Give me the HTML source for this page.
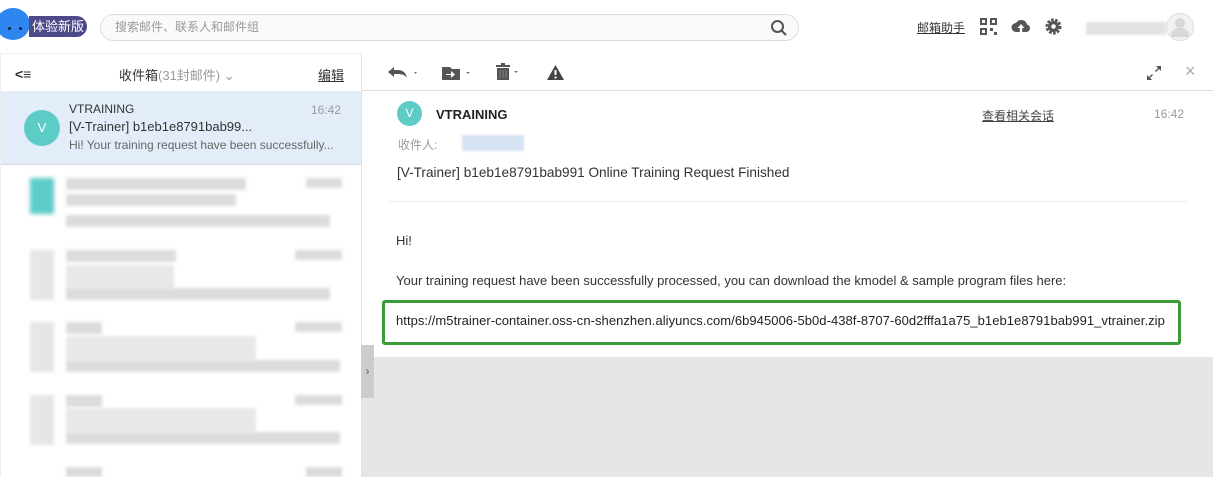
<!DOCTYPE html>
<html><head><meta charset="utf-8"><style>
*{margin:0;padding:0;box-sizing:border-box}
body{width:1213px;height:477px;overflow:hidden;background:#fff;font-family:"Liberation Sans","Noto Sans CJK SC",sans-serif;position:relative;color:#333}
.a{position:absolute}
.b{position:absolute;background:#dcdcdc;filter:blur(1.5px)}
</style></head><body>
<!-- top bar -->
<div class="a" style="left:-4px;top:8px;width:34px;height:32px;border-radius:50%;background:#2e86f0"></div>
<div class="a" style="left:8px;top:27px;width:3px;height:3px;background:#123;border-radius:50%"></div>
<div class="a" style="left:19px;top:27px;width:3px;height:3px;background:#123;border-radius:50%"></div>
<div class="a" style="left:29px;top:16px;width:58px;height:21px;border-radius:0 11px 11px 0;background:#4d4a8a;color:#fff;font-size:13px;line-height:21px;padding-left:3px">体验新版</div>
<div class="a" style="left:100px;top:14px;width:699px;height:27px;border:1px solid #ddd;border-radius:14px;background:#fafafa;font-size:12px;color:#999;line-height:25px;padding-left:14px">搜索邮件、联系人和邮件组</div>
<svg class="a" style="left:770px;top:19px" width="18" height="18" viewBox="0 0 18 18"><circle cx="7.5" cy="7.5" r="5.5" fill="none" stroke="#555" stroke-width="2"/><path d="M11.5 11.5L16 16" stroke="#555" stroke-width="2.2"/></svg>
<div class="a" style="left:917px;top:19px;font-size:12px;text-decoration:underline;color:#333">邮箱助手</div>
<svg class="a" style="left:980px;top:18px" width="17" height="17" viewBox="0 0 17 17" fill="#555"><rect x="0" y="0" width="7" height="7"/><rect x="10" y="0" width="7" height="7"/><rect x="0" y="10" width="7" height="7"/><rect x="10" y="10" width="3" height="3"/><rect x="14" y="14" width="3" height="3"/><rect x="2" y="2" width="3" height="3" fill="#fff"/><rect x="12" y="2" width="3" height="3" fill="#fff"/><rect x="2" y="12" width="3" height="3" fill="#fff"/></svg>
<svg class="a" style="left:1011px;top:18px" width="20" height="16" viewBox="0 0 20 16"><path d="M5 14a4.5 4.5 0 0 1 0-9 6 6 0 0 1 11 1.5 3.8 3.8 0 0 1-1 7.5z" fill="#555"/><path d="M10 6l-3.5 4h2.3v4h2.4v-4h2.3z" fill="#fff"/></svg>
<svg class="a" style="left:1045px;top:18px" width="17" height="17" viewBox="0 0 17 17"><circle cx="8.5" cy="8.5" r="6" fill="none" stroke="#555" stroke-width="4" stroke-dasharray="2.4 1.3"/><circle cx="8.5" cy="8.5" r="5.5" fill="#555"/><circle cx="8.5" cy="8.5" r="2.3" fill="#fff"/></svg>
<div class="a" style="left:1086px;top:22px;width:80px;height:13px;background:#e3e3e3;filter:blur(1px)"></div>
<div class="a" style="left:1166px;top:13px;width:28px;height:28px;border-radius:50%;border:1px solid #ddd;background:#f2f2f2"></div>
<div class="a" style="left:1175px;top:18px;width:10px;height:10px;border-radius:50%;background:#d8d8d8"></div>
<div class="a" style="left:1171px;top:28px;width:18px;height:9px;border-radius:9px 9px 2px 2px;background:#d8d8d8"></div>
<!-- left panel -->
<div class="a" style="left:0;top:53px;width:362px;height:424px;border-right:1px solid #e3e3e3;border-left:1px solid #eee;border-top:1px solid #eee"></div>
<div class="a" style="left:15px;top:66px;font-size:14px;font-weight:bold;color:#333">&lt;≡</div>
<div class="a" style="left:119px;top:65px;font-size:13px;color:#333">收件箱<span style="color:#999">(31封邮件) ⌄</span></div>
<div class="a" style="left:318px;top:65px;font-size:13px;color:#333;text-decoration:underline">编辑</div>
<div class="a" style="left:1px;top:91px;width:360px;height:74px;background:#e3edf9;border-bottom:1px solid #d6dde8"></div>
<div class="a" style="left:24px;top:110px;width:36px;height:36px;border-radius:50%;background:#5dcbc6;color:#fff;font-size:13px;text-align:center;line-height:36px">V</div>
<div class="a" style="left:69px;top:102px;font-size:12px;color:#333">VTRAINING</div>
<div class="a" style="left:311px;top:103px;font-size:12px;color:#999">16:42</div>
<div class="a" style="left:69px;top:119px;font-size:13px;color:#333">[V-Trainer] b1eb1e8791bab99...</div>
<div class="a" style="left:69px;top:138px;font-size:12px;color:#666">Hi! Your training request have been successfully...</div>
<!-- blurred list -->
<div class="a" style="left:30px;top:178px;width:24px;height:36px;background:#5dcbc6;filter:blur(2px)"></div>
<div class="b" style="left:66px;top:178px;width:180px;height:12px"></div>
<div class="b" style="left:66px;top:194px;width:170px;height:12px"></div>
<div class="b" style="left:66px;top:215px;width:264px;height:12px"></div>
<div class="b" style="left:306px;top:178px;width:36px;height:10px"></div>
<div class="b" style="left:30px;top:250px;width:24px;height:50px;background:#e6e6e6"></div>
<div class="b" style="left:66px;top:250px;width:110px;height:12px"></div>
<div class="b" style="left:66px;top:265px;width:108px;height:24px;background:#e8e8e8"></div>
<div class="b" style="left:66px;top:288px;width:264px;height:12px"></div>
<div class="b" style="left:295px;top:250px;width:47px;height:10px"></div>
<div class="b" style="left:30px;top:322px;width:24px;height:50px;background:#e6e6e6"></div>
<div class="b" style="left:66px;top:322px;width:36px;height:12px"></div>
<div class="b" style="left:66px;top:336px;width:190px;height:24px;background:#e8e8e8"></div>
<div class="b" style="left:66px;top:360px;width:274px;height:12px"></div>
<div class="b" style="left:295px;top:322px;width:47px;height:10px"></div>
<div class="b" style="left:30px;top:395px;width:24px;height:50px;background:#e6e6e6"></div>
<div class="b" style="left:66px;top:395px;width:36px;height:12px"></div>
<div class="b" style="left:66px;top:408px;width:190px;height:24px;background:#e8e8e8"></div>
<div class="b" style="left:66px;top:432px;width:274px;height:12px"></div>
<div class="b" style="left:295px;top:395px;width:47px;height:10px"></div>
<div class="b" style="left:66px;top:467px;width:36px;height:10px"></div>
<div class="b" style="left:306px;top:467px;width:36px;height:10px"></div>
<!-- right panel -->
<div class="a" style="left:362px;top:90px;width:851px;height:1px;background:#ddd"></div>
<svg class="a" style="left:387px;top:65px" width="32" height="16" viewBox="0 0 32 16"><path d="M1 7l6-5v3h4c5 0 8 3 9 8-2-3-5-4-9-4H7v3z" fill="#555"/><path d="M27 7l3 0-1.5 2z" fill="#777"/></svg>
<svg class="a" style="left:441px;top:64px" width="32" height="18" viewBox="0 0 32 18"><path d="M1 3h8l2 2h8v11H1z" fill="#555"/><path d="M5 10h5V7l4 3.5-4 3.5v-3H5z" fill="#fff"/><path d="M25 8h4l-2 2z" fill="#777"/></svg>
<svg class="a" style="left:495px;top:63px" width="32" height="18" viewBox="0 0 32 18"><rect x="1" y="2" width="14" height="2" fill="#555"/><rect x="6" y="0" width="4" height="2" fill="#555"/><path d="M2 5h12v12H2z" fill="#555"/><path d="M5 7v8M8 7v8M11 7v8" stroke="#888" stroke-width="1"/><path d="M19 8h4l-2 2z" fill="#777"/></svg>
<svg class="a" style="left:546px;top:64px" width="19" height="17" viewBox="0 0 19 17"><path d="M9.5 1L18 16H1z" fill="#444"/><rect x="8.5" y="6" width="2" height="5" fill="#fff"/><rect x="8.5" y="12.5" width="2" height="2" fill="#fff"/></svg>
<svg class="a" style="left:1146px;top:65px" width="16" height="16" viewBox="0 0 16 16" fill="#555"><path d="M10 1h5v5l-2-2-3 3-1-1 3-3z"/><path d="M6 15H1v-5l2 2 3-3 1 1-3 3z"/></svg>
<div class="a" style="left:1185px;top:61px;font-size:18px;color:#aaa">×</div>
<div class="a" style="left:397px;top:101px;width:25px;height:25px;border-radius:50%;background:#5dcbc6;color:#fff;font-size:12px;text-align:center;line-height:25px">V</div>
<div class="a" style="left:436px;top:107px;font-size:13px;font-weight:bold;color:#222">VTRAINING</div>
<div class="a" style="left:982px;top:107px;font-size:12px;color:#444;text-decoration:underline">查看相关会话</div>
<div class="a" style="left:1154px;top:107px;font-size:12px;color:#999">16:42</div>
<div class="a" style="left:398px;top:136px;font-size:12px;color:#999">收件人:</div>
<div class="a" style="left:462px;top:135px;width:62px;height:16px;background:#d5e2f2;filter:blur(1px)"></div>
<div class="a" style="left:397px;top:165px;font-size:13.6px;color:#333">[V-Trainer] b1eb1e8791bab991 Online Training Request Finished</div>
<div class="a" style="left:388px;top:201px;width:800px;height:1px;background:#eee"></div>
<div class="a" style="left:396px;top:233px;font-size:13px;color:#333">Hi!</div>
<div class="a" style="left:396px;top:273px;font-size:13px;color:#333">Your training request have been successfully processed, you can download the kmodel &amp; sample program files here:</div>
<div class="a" style="left:382px;top:300px;width:799px;height:45px;border:3px solid #3a9b38;border-radius:3px"></div>
<div class="a" style="left:396px;top:313px;font-size:13px;color:#222;letter-spacing:0.05px;white-space:nowrap">https://m5trainer-container.oss-cn-shenzhen.aliyuncs.com/6b945006-5b0d-438f-8707-60d2fffa1a75_b1eb1e8791bab991_vtrainer.zip</div>
<div class="a" style="left:362px;top:357px;width:851px;height:120px;background:#e6e6e6"></div>
<div class="a" style="left:361px;top:345px;width:13px;height:53px;background:#ccc;color:#666;font-size:12px;text-align:center;line-height:53px">›</div>
</body></html>
